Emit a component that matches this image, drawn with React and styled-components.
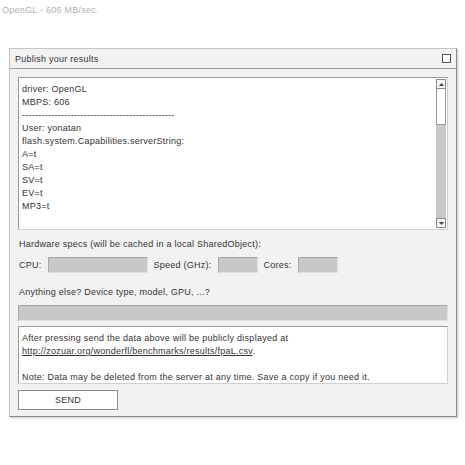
import React from "react";
import styled, { createGlobalStyle } from "styled-components";

const GlobalStyle = createGlobalStyle`
  html, body {
    margin: 0;
    padding: 0;
    background: #ffffff;
  }
  body {
    font-family: "Liberation Sans", Arial, sans-serif;
    font-size: 9px;
    letter-spacing: 0.25px;
    color: #333333;
  }
`;

const Page = styled.div`
  width: 465px;
  height: 465px;
  padding: 4px 0 0 2px;
  box-sizing: border-box;
`;

const Status = styled.div`
  color: #b0b0b0;
  height: 12px;
  line-height: 12px;
`;

const Panel = styled.div`
  margin: 32px 0 0 7px;
  width: 448px;
  height: 369px;
  box-sizing: border-box;
  background: #f2f2f2;
  border: 1px solid #c4c4c4;
  border-right-color: #8a8a8a;
  border-bottom-color: #8a8a8a;
  box-shadow: 1px 1px 0 #d8d8d8, 2px 2px 1px #ececec;
  display: flex;
  flex-direction: column;
`;

const Header = styled.div`
  height: 19px;
  border-bottom: 1px solid #9a9a9a;
  display: flex;
  align-items: center;
  justify-content: space-between;
  padding: 0 5px 0 5px;
`;

const HeaderTitle = styled.span`
  color: #333;
`;

const CloseBox = styled.div`
  width: 7px;
  height: 7px;
  border: 1px solid #555;
  background: #fff;
`;

const Body = styled.div`
  padding: 8px 8px 0 8px;
  display: flex;
  flex-direction: column;
`;

const LogBox = styled.div`
  height: 153px;
  box-sizing: border-box;
  background: #fff;
  border: 1px solid #9a9a9a;
  border-right-color: #d0d0d0;
  border-bottom-color: #d0d0d0;
  display: flex;
`;

const LogText = styled.div`
  flex: 1;
  padding: 5px 0 0 3px;
  line-height: 13px;
  white-space: pre;
`;

const Scrollbar = styled.div`
  width: 10px;
  margin: 1px 1px 1px 0;
  display: flex;
  flex-direction: column;
  background: #c8c8c8;
`;

const ArrowBtn = styled.div`
  height: 10px;
  box-sizing: border-box;
  background: #f4f4f4;
  border: 1px solid #8a8a8a;
  display: flex;
  align-items: center;
  justify-content: center;
`;

const Thumb = styled.div`
  height: 36px;
  box-sizing: border-box;
  background: #fff;
  border: 1px solid #9a9a9a;
  border-top: none;
`;

const Track = styled.div`
  flex: 1;
`;

const Label = styled.div`
  margin: ${(p) => p.$m || "0"};
  line-height: 12px;
  color: #333;
`;

const Row = styled.div`
  display: flex;
  align-items: center;
  gap: 6px;
  margin-top: 7px;
  height: 16px;
`;

const Field = styled.div`
  width: ${(p) => p.$w}px;
  height: 16px;
  box-sizing: border-box;
  background: #c8c8c8;
  border: 1px solid #a8a8a8;
  border-right-color: #e0e0e0;
  border-bottom-color: #e0e0e0;
`;

const WideField = styled(Field)`
  width: auto;
  margin-top: 7px;
`;

const Info = styled.div`
  margin-top: 5px;
  height: 58px;
  box-sizing: border-box;
  background: #fff;
  border: 1px solid #9a9a9a;
  border-right-color: #d0d0d0;
  border-bottom-color: #d0d0d0;
  padding: 5px 0 0 3px;
  line-height: 13px;
`;

const Link = styled.span`
  text-decoration: underline;
`;

const SendButton = styled.button`
  margin-top: 6px;
  width: 100px;
  height: 20px;
  box-sizing: border-box;
  background: #fff;
  border: 1px solid #8a8a8a;
  font-family: inherit;
  font-size: 9px;
  letter-spacing: inherit;
  color: #333;
  padding: 0;
`;

const Arrow = ({ up }) => (
  <svg width="5" height="3" viewBox="0 0 5 3">
    <path d={up ? "M2.5 0 L5 3 L0 3 Z" : "M0 0 L5 0 L2.5 3 Z"} fill="#444" />
  </svg>
);

const log = [
  "driver: OpenGL",
  "MBPS: 606",
  "-----------------------------------------------",
  "User: yonatan",
  "flash.system.Capabilities.serverString:",
  "A=t",
  "SA=t",
  "SV=t",
  "EV=t",
  "MP3=t",
].join("\n");

export default function App() {
  return (
    <>
      <GlobalStyle />
      <Page>
        <Status>OpenGL - 606 MB/sec.</Status>
        <Panel>
          <Header>
            <HeaderTitle>Publish your results</HeaderTitle>
            <CloseBox />
          </Header>
          <Body>
            <LogBox>
              <LogText>{log}</LogText>
              <Scrollbar>
                <ArrowBtn>
                  <Arrow up />
                </ArrowBtn>
                <Thumb />
                <Track />
                <ArrowBtn>
                  <Arrow />
                </ArrowBtn>
              </Scrollbar>
            </LogBox>
            <Label $m="8px 0 0 1px">
              Hardware specs (will be cached in a local SharedObject):
            </Label>
            <Row>
              <Label $m="0 0 0 1px">CPU:</Label>
              <Field $w={100} />
              <Label>Speed (GHz):</Label>
              <Field $w={40} />
              <Label>Cores:</Label>
              <Field $w={40} />
            </Row>
            <Label $m="13px 0 0 1px">Anything else? Device type, model, GPU, ...?</Label>
            <WideField />
            <Info>
              After pressing send the data above will be publicly displayed at
              <br />
              <Link>http://zozuar.org/wonderfl/benchmarks/results/fpaL.csv</Link>.
              <br />
              <br />
              Note: Data may be deleted from the server at any time. Save a copy if you need it.
            </Info>
            <SendButton>SEND</SendButton>
          </Body>
        </Panel>
      </Page>
    </>
  );
}
